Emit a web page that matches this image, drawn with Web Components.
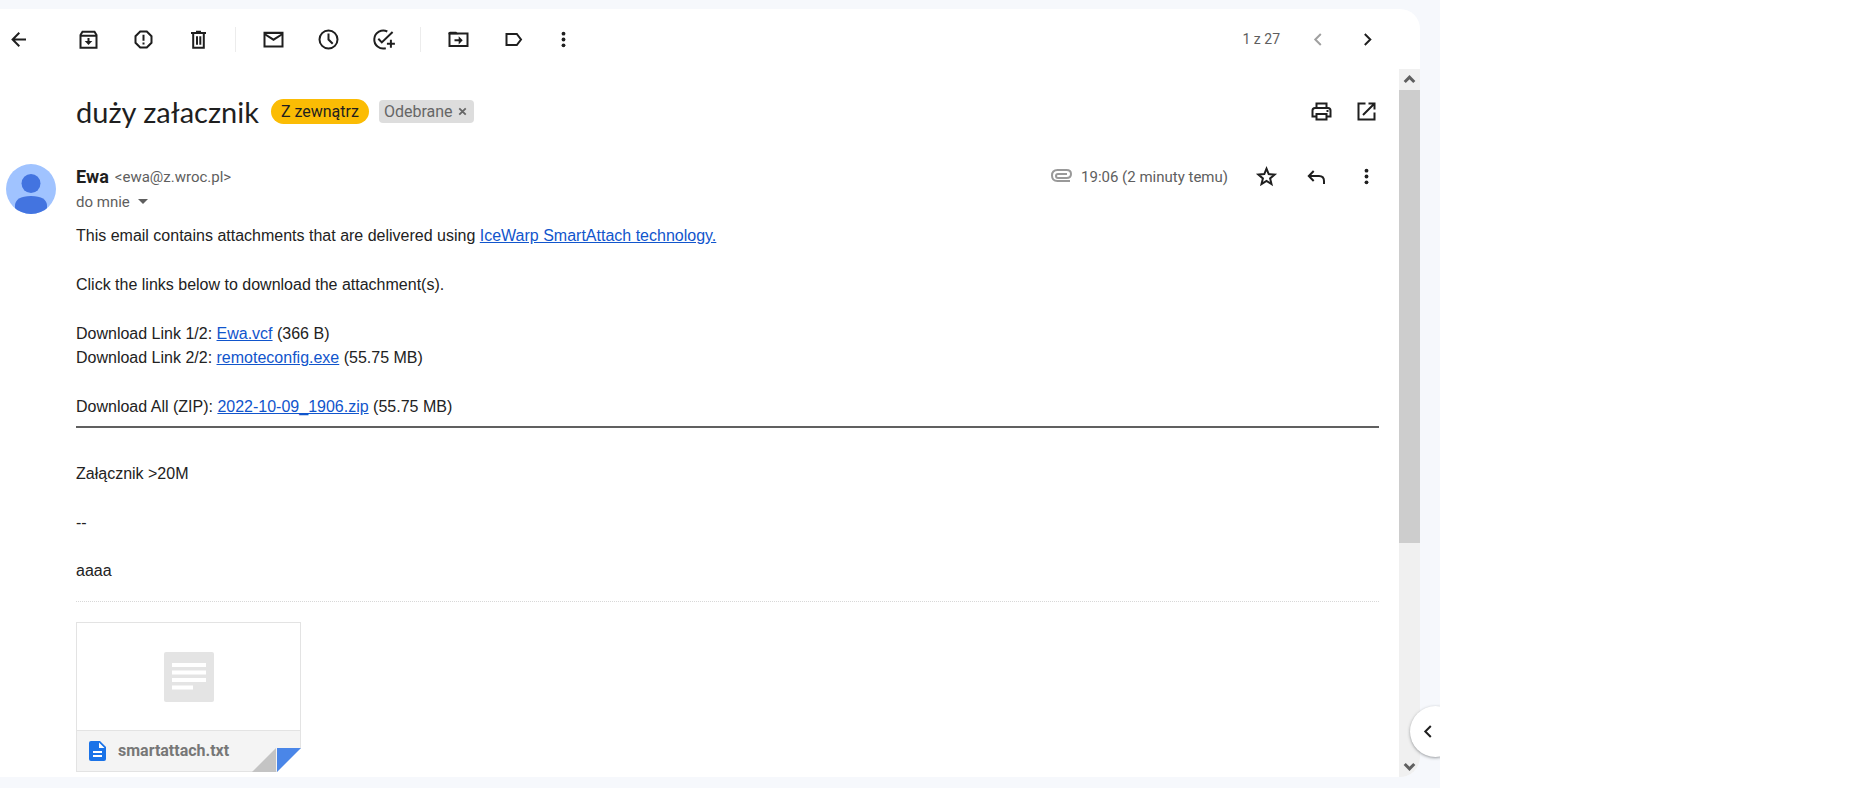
<!DOCTYPE html>
<html lang="pl">
<head>
<meta charset="utf-8">
<title>duży załacznik</title>
<style>
  html, body {
    margin: 0;
    height: 100%;
    background: #fff;
  }

  body {
    --ui-font: Roboto, "Noto Sans", sans-serif;
    --title-font: Lato, "Noto Sans", sans-serif;
    --ink: #1f1f1f;
    --muted: #5e5e5e;
    --link: #1155cc;
    font-family: var(--ui-font);
    font-size: 16px;
    line-height: 24px;
    color: var(--ink);
  }
</style>
</head>
<body>
<mail-app>
  <mail-toolbar slot="toolbar"></mail-toolbar>
  <mail-subject label="Odebrane" warning="Z zewnątrz">duży załacznik</mail-subject>
  <mail-message sender="Ewa" address="&lt;ewa@z.wroc.pl&gt;" recipient="do mnie" time="19:06 (2 minuty temu)">
    <mail-body></mail-body>
    <attachment-card name="smartattach.txt"></attachment-card>
  </mail-message>
</mail-app>

<script>
// Icons are drawn on a 25px grid
const ICONS = {
  back: `<path d="M20 12.500H7M13.300 5.800 6.600 12.500l6.700 6.700"/>`,
  archive: `<path d="M4.500 8 6.500 4.700h12L20.500 8v12.700h-16z"/><path d="M4.500 8.700h16"/><path d="M12.500 11v5"/><path class="fill" d="M8.700 14h7.600l-3.800 4z"/>`,
  spam: `<path d="M9.200 4.500h6.600l4.700 4.700v6.600l-4.700 4.700H9.200l-4.700-4.700V9.200z"/><path d="M12.500 7.700v6.100M12.500 15.500v2"/>`,
  trash: `<path d="M5 6h15M10 4.800h5M7.200 6v14.700h10.600V6M11 9.200v8.600M14.300 9.200v8.600"/>`,
  mail: `<path d="M3.500 5.800h18v13.700h-18z"/><path d="m3.500 7 9 5.700 9-5.700M3.500 6h18"/>`,
  clock: `<circle cx="12.500" cy="12.500" r="9"/><path d="M12.500 6.500v6l4.200 4.200"/>`,
  task: `<path d="M16.300 4.500A9 9 0 1 0 14.800 21.200"/><path d="m7.300 11.800 3.500 3.600L21.600 5M19.900 12.700v8M15.900 16.700h8"/>`,
  move: `<path d="M3.500 6.500h18v12.500h-18z"/><path class="fill" d="M2.500 6.200q0-1.500 1.500-1.500h6.200l2.300 2.600h-10z"/><path d="M8.500 13.300h6"/><path class="fill" d="m12.700 9.200 4 4.100-4 4.100z"/>`,
  label: `<path d="M5.500 7h10.300l4.200 5.500-4.200 5.500H5.500z"/>`,
  more: `<g class="fill"><circle cx="12.500" cy="6.700" r="1.900"/><circle cx="12.500" cy="12.500" r="1.900"/><circle cx="12.500" cy="18.300" r="1.900"/></g>`,
  prev: `<path d="m14.800 7-5.500 5.500 5.500 5.500"/>`,
  next: `<path d="m8.800 7 5.500 5.500-5.500 5.500"/>`,
  print: `<path d="M7.500 8.500V4.500h10v4M7 17.500H3.500v-6q0-2.500 2.500-2.500h13q2.500 0 2.500 2.500v6H18"/><path d="M7.500 15h10v5.500h-10zM17.500 12h2"/>`,
  popout: `<path d="M11.500 4.500h-7v16h16v-7M14.500 4.500h6v6M20 5 9 16"/>`,
  star: `<path d="m12.500 4.700 2.200 5.400 5.900.5-4.500 3.800 1.400 5.700-5-3.100-5 3.100 1.400-5.700-4.500-3.800 5.900-.5z"/>`,
  reply: `<path d="M9.700 7 4.800 12l4.900 5M5 12h10q5 0 5 5v3"/>`,
  up: `<path d="m7.700 15 4.800-4.800 4.800 4.800"/>`,
  down: `<path d="m7.700 10 4.800 4.800 4.800-4.800"/>`,
  close: `<path d="m9 9 7 7M16 9l-7 7"/>`,
  clip: `<path d="M21 17H8.500Q3 17 3 11.500T8.500 6h9q4.500 0 4.500 4t-4.500 4H9q-2 0-2-2t2-2h9"/>`,
};

// Single inline icon
class UiIcon extends HTMLElement {
  connectedCallback() {
    this.attachShadow({ mode: "open" }).innerHTML = `
      <style>
        :host {
          display: block;
          width: 25px;
          height: 25px;
        }

        svg {
          display: block;
          width: 100%;
          height: 100%;
          fill: none;
          stroke: currentColor;
          stroke-width: var(--icon-stroke, 2);
        }

        .fill {
          fill: currentColor;
          stroke: none;
        }
      </style>
      <svg viewBox="0 0 25 25" aria-hidden="true">${ICONS[this.getAttribute("name")]}</svg>
    `;
  }
}

// Borderless button around an icon
class IconButton extends HTMLElement {
  connectedCallback() {
    this.attachShadow({ mode: "open" }).innerHTML = `
      <style>
        :host {
          display: block;
          flex: none;
          width: 50px;
        }

        button {
          display: flex;
          align-items: center;
          justify-content: center;
          width: 100%;
          height: 35px;
          padding: 0;
          border: none;
          background: none;
          color: inherit;
          cursor: pointer;
        }
      </style>
      <button type="button" aria-label="${this.getAttribute("label")}">
        <ui-icon name="${this.getAttribute("icon")}"></ui-icon>
      </button>
    `;
  }
}

// Page frame: rounded panel, scrollbar and the side tab
class MailApp extends HTMLElement {
  connectedCallback() {
    this.attachShadow({ mode: "open" }).innerHTML = `
      <style>
        :host {
          display: grid;
          grid-template-columns: minmax(0, 1fr) 431px;
          min-height: 100vh;
        }

        .app {
          position: relative;
          display: flex;
          box-sizing: border-box;
          padding: 9px 20px 11px 0;
          background: #f6f8fc;
          overflow: hidden;
        }

        .panel {
          flex: 1;
          min-width: 0;
          display: flex;
          flex-direction: column;
          background: #fff;
          border-radius: 0 20px 20px 0;
          overflow: hidden;
        }

        .view {
          flex: 1;
          display: flex;
        }

        main {
          flex: 1;
          min-width: 0;
          padding-right: 20px;
        }

        .side-tab {
          position: absolute;
          right: -21px;
          bottom: 31px;
          width: 51px;
          height: 51px;
          padding: 0 0 0 6px;
          border: none;
          border-radius: 50%;
          background: #fff;
          color: var(--ink);
          box-shadow: 0 1px 3px rgba(60, 64, 67, 0.5);
        }
      </style>
      <div class="app">
        <div class="panel">
          <slot name="toolbar"></slot>
          <div class="view">
            <main><slot></slot></main>
            <scroll-track></scroll-track>
          </div>
        </div>
        <button class="side-tab" type="button" aria-label="Pokaż panel boczny">
          <ui-icon name="prev"></ui-icon>
        </button>
      </div>
    `;
  }
}

class ScrollTrack extends HTMLElement {
  connectedCallback() {
    this.attachShadow({ mode: "open" }).innerHTML = `
      <style>
        :host {
          display: flex;
          flex-direction: column;
          width: 21px;
          background: #f0f0f0;
          color: #606060;
          --icon-stroke: 3;
        }

        .end {
          display: flex;
          align-items: center;
          justify-content: center;
          height: 21px;
        }

        .end ui-icon {
          flex: none;
        }

        .rail {
          flex: 1;
        }

        .thumb {
          height: 68%;
          background: #cdcdcd;
        }
      </style>
      <div class="end"><ui-icon name="up"></ui-icon></div>
      <div class="rail"><div class="thumb"></div></div>
      <div class="end"><ui-icon name="down"></ui-icon></div>
    `;
  }
}

class MailToolbar extends HTMLElement {
  connectedCallback() {
    this.attachShadow({ mode: "open" }).innerHTML = `
      <style>
        :host {
          display: flex;
          align-items: center;
          height: 60px;
          padding-right: 27px;
        }

        icon-button {
          width: 55px;
        }

        .back {
          width: 37px;
          margin-right: 24px;
        }

        .menu {
          width: 45px;
        }

        .pager {
          width: 50px;
        }

        .off {
          color: #a0a0a0;
        }

        .sep {
          flex: none;
          width: 1px;
          height: 25px;
          margin: 0 10px 0 9px;
          background: #ececec;
        }

        .count {
          margin-left: auto;
          padding-right: 13px;
          font-size: 14px;
          color: var(--muted);
        }
      </style>
      <icon-button class="back" icon="back" label="Wróć"></icon-button>
      <icon-button icon="archive" label="Archiwizuj"></icon-button>
      <icon-button icon="spam" label="Zgłoś spam"></icon-button>
      <icon-button icon="trash" label="Usuń"></icon-button>
      <span class="sep"></span>
      <icon-button icon="mail" label="Oznacz jako nieprzeczytane"></icon-button>
      <icon-button icon="clock" label="Odłóż"></icon-button>
      <icon-button icon="task" label="Dodaj do zadań"></icon-button>
      <span class="sep"></span>
      <icon-button icon="move" label="Przenieś do"></icon-button>
      <icon-button icon="label" label="Etykiety"></icon-button>
      <icon-button class="menu" icon="more" label="Więcej"></icon-button>
      <span class="count">1 z 27</span>
      <icon-button class="pager off" icon="prev" label="Nowsze"></icon-button>
      <icon-button class="pager" icon="next" label="Starsze"></icon-button>
    `;
  }
}

// Subject line with its chips
class MailSubject extends HTMLElement {
  connectedCallback() {
    this.attachShadow({ mode: "open" }).innerHTML = `
      <style>
        :host {
          display: flex;
          align-items: center;
          height: 85px;
          padding-left: 76px;
        }

        h1 {
          margin: 0 12px 0 0;
          font: 400 29px/34px var(--title-font);
        }

        .warning {
          padding: 0 10px;
          border-radius: 13px;
          background: #fbbc04;
          line-height: 25px;
        }

        .label {
          display: flex;
          align-items: center;
          margin-left: 10px;
          padding: 0 5px;
          border-radius: 4px;
          background: #ddd;
          color: #666;
          line-height: 23px;
        }

        .label button {
          display: flex;
          justify-content: center;
          width: 12px;
          margin-left: 4px;
          padding: 0;
          border: none;
          background: none;
          color: inherit;
        }

        .label ui-icon {
          flex: none;
          height: 23px;
        }

        .actions {
          display: flex;
          margin: 0 -10px 0 auto;
        }

        .actions icon-button {
          width: 45px;
        }
      </style>
      <h1><slot></slot></h1>
      <span class="warning">${this.getAttribute("warning")}</span>
      <span class="label">${this.getAttribute("label")}<button type="button" aria-label="Usuń etykietę"><ui-icon name="close"></ui-icon></button></span>
      <span class="actions">
        <icon-button icon="print" label="Drukuj"></icon-button>
        <icon-button icon="popout" label="W nowym oknie"></icon-button>
      </span>
    `;
  }
}

// Avatar, sender row and the message content
class MailMessage extends HTMLElement {
  connectedCallback() {
    this.attachShadow({ mode: "open" }).innerHTML = `
      <style>
        :host {
          display: grid;
          grid-template-columns: 50px minmax(0, 1fr);
          column-gap: 20px;
          padding: 10px 0 0 6px;
        }

        .avatar {
          display: block;
          width: 50px;
          height: 50px;
        }

        header {
          display: flex;
          align-items: flex-start;
          height: 60px;
          font-size: 15px;
        }

        .line {
          display: flex;
          align-items: center;
          gap: 6px;
          height: 25px;
          color: var(--muted);
        }

        .name {
          color: var(--ink);
          font-weight: 700;
          font-size: 18px;
        }

        .recipient {
          display: flex;
          align-items: center;
          gap: 8px;
          padding: 0;
          border: none;
          background: none;
          font: inherit;
          color: inherit;
        }

        .caret {
          border: 5px solid transparent;
          border-top-color: currentColor;
          border-bottom: none;
        }

        .meta {
          display: flex;
          align-items: center;
          height: 25px;
          margin: 0 -12px 0 auto;
          color: var(--muted);
        }

        .clip {
          margin-right: 7px;
          color: #999;
        }

        .time {
          margin-right: 13px;
        }

        icon-button {
          color: var(--ink);
        }
      </style>
      <svg class="avatar" viewBox="0 0 50 50" aria-hidden="true">
        <clipPath id="round"><circle cx="25" cy="25" r="25"/></clipPath>
        <g clip-path="url(#round)">
          <path fill="#a0c3ff" d="M0 0h50v50H0z"/>
          <circle cx="25" cy="19.500" r="9.500" fill="#4374e0"/>
          <path fill="#4374e0" d="M9 50v-8q0-10 16-10t16 10v8z"/>
        </g>
      </svg>
      <div>
        <header>
          <div>
            <div class="line"><span class="name">${this.getAttribute("sender")}</span><span>${this.escapeHtml(this.getAttribute("address"))}</span></div>
            <div class="line"><button class="recipient" type="button">${this.getAttribute("recipient")}<span class="caret"></span></button></div>
          </div>
          <div class="meta">
            <ui-icon class="clip" name="clip"></ui-icon>
            <span class="time">${this.getAttribute("time")}</span>
            <icon-button icon="star" label="Oznacz gwiazdką"></icon-button>
            <icon-button icon="reply" label="Odpowiedz"></icon-button>
            <icon-button icon="more" label="Więcej"></icon-button>
          </div>
        </header>
        <slot></slot>
      </div>
    `;
  }

  escapeHtml(text) {
    const div = document.createElement("div");
    div.textContent = text;
    return div.innerHTML;
  }
}

class MailBody extends HTMLElement {
  connectedCallback() {
    this.attachShadow({ mode: "open" }).innerHTML = `
      <style>
        :host {
          display: block;
          font: 16px/24px "Liberation Sans", Arial, sans-serif;
          color: #222;
        }

        p {
          margin: 0 0 25px;
        }

        a {
          color: var(--link);
        }

        hr {
          height: 2px;
          margin: -18px 0 34px;
          border: none;
          background: #606060;
        }

        .sign {
          margin: 0 0 18px;
        }

        .dashes {
          margin-bottom: 24px;
        }
      </style>
      <p>This email contains attachments that are delivered using <a href="#">IceWarp SmartAttach technology.</a></p>
      <p>Click the links below to download the attachment(s).</p>
      <p>Download Link 1/2: <a href="#">Ewa.vcf</a> (366 B)<br>
        Download Link 2/2: <a href="#">remoteconfig.exe</a> (55.75 MB)</p>
      <p>Download All (ZIP): <a href="#">2022-10-09_1906.zip</a> (55.75 MB)</p>
      <hr>
      <p>Załącznik &gt;20M</p>
      <p class="dashes">--</p>
      <p class="sign">aaaa</p>
    `;
  }
}

// Attachment tile with a folded corner
class AttachmentCard extends HTMLElement {
  connectedCallback() {
    this.attachShadow({ mode: "open" }).innerHTML = `
      <style>
        :host {
          display: block;
          padding-top: 20px;
          border-top: 1px dotted #d8d8d8;
        }

        .card {
          position: relative;
          display: flex;
          flex-direction: column;
          box-sizing: border-box;
          width: 225px;
          height: 150px;
          border: 1px solid #e3e3e3;
          color: #777;
          text-decoration: none;
        }

        .preview {
          flex: 1;
          display: flex;
          align-items: center;
          justify-content: center;
        }

        .preview svg {
          width: 50px;
          height: 50px;
        }

        .file {
          display: flex;
          align-items: center;
          gap: 12px;
          height: 40px;
          padding-left: 12px;
          border-top: 1px solid #e3e3e3;
          background: #f4f4f4;
          font-weight: 700;
        }

        .file svg {
          width: 17px;
          height: 20px;
        }

        .fold {
          position: absolute;
          right: -1px;
          bottom: -1px;
          width: 49px;
          height: 24px;
        }
      </style>
      <a class="card" href="#">
        <span class="preview">
          <svg viewBox="0 0 50 50" aria-hidden="true">
            <rect width="50" height="50" rx="2" fill="#e4e4e4"/>
            <path fill="#fff" d="M8 11h34v4H8zM8 18.500h34v4H8zM8 26h34v4H8zM8 33.500h21v4H8z"/>
          </svg>
        </span>
        <span class="file">
          <svg viewBox="0 0 17 20" aria-hidden="true">
            <path fill="#1a73e8" d="M2 0h9l6 6v12q0 2-2 2H2q-2 0-2-2V2q0-2 2-2z"/>
            <path fill="#fff" d="M10 1.500V7h5.500zM4 10h9v2H4zM4 14h9v2H4z"/>
          </svg>
          <span>${this.getAttribute("name")}</span>
        </span>
        <svg class="fold" viewBox="0 0 49 24" aria-hidden="true">
          <path fill="#fff" d="M49 0v24H25z"/>
          <path fill="#c4c4c4" d="M24 0v24H0z"/>
          <path fill="#4a86e8" d="M25 0h24L25 24z"/>
        </svg>
      </a>
    `;
  }
}

customElements.define("ui-icon", UiIcon);
customElements.define("icon-button", IconButton);
customElements.define("scroll-track", ScrollTrack);
customElements.define("mail-toolbar", MailToolbar);
customElements.define("mail-subject", MailSubject);
customElements.define("mail-body", MailBody);
customElements.define("attachment-card", AttachmentCard);
customElements.define("mail-message", MailMessage);
customElements.define("mail-app", MailApp);
</script>
</body>
</html>
